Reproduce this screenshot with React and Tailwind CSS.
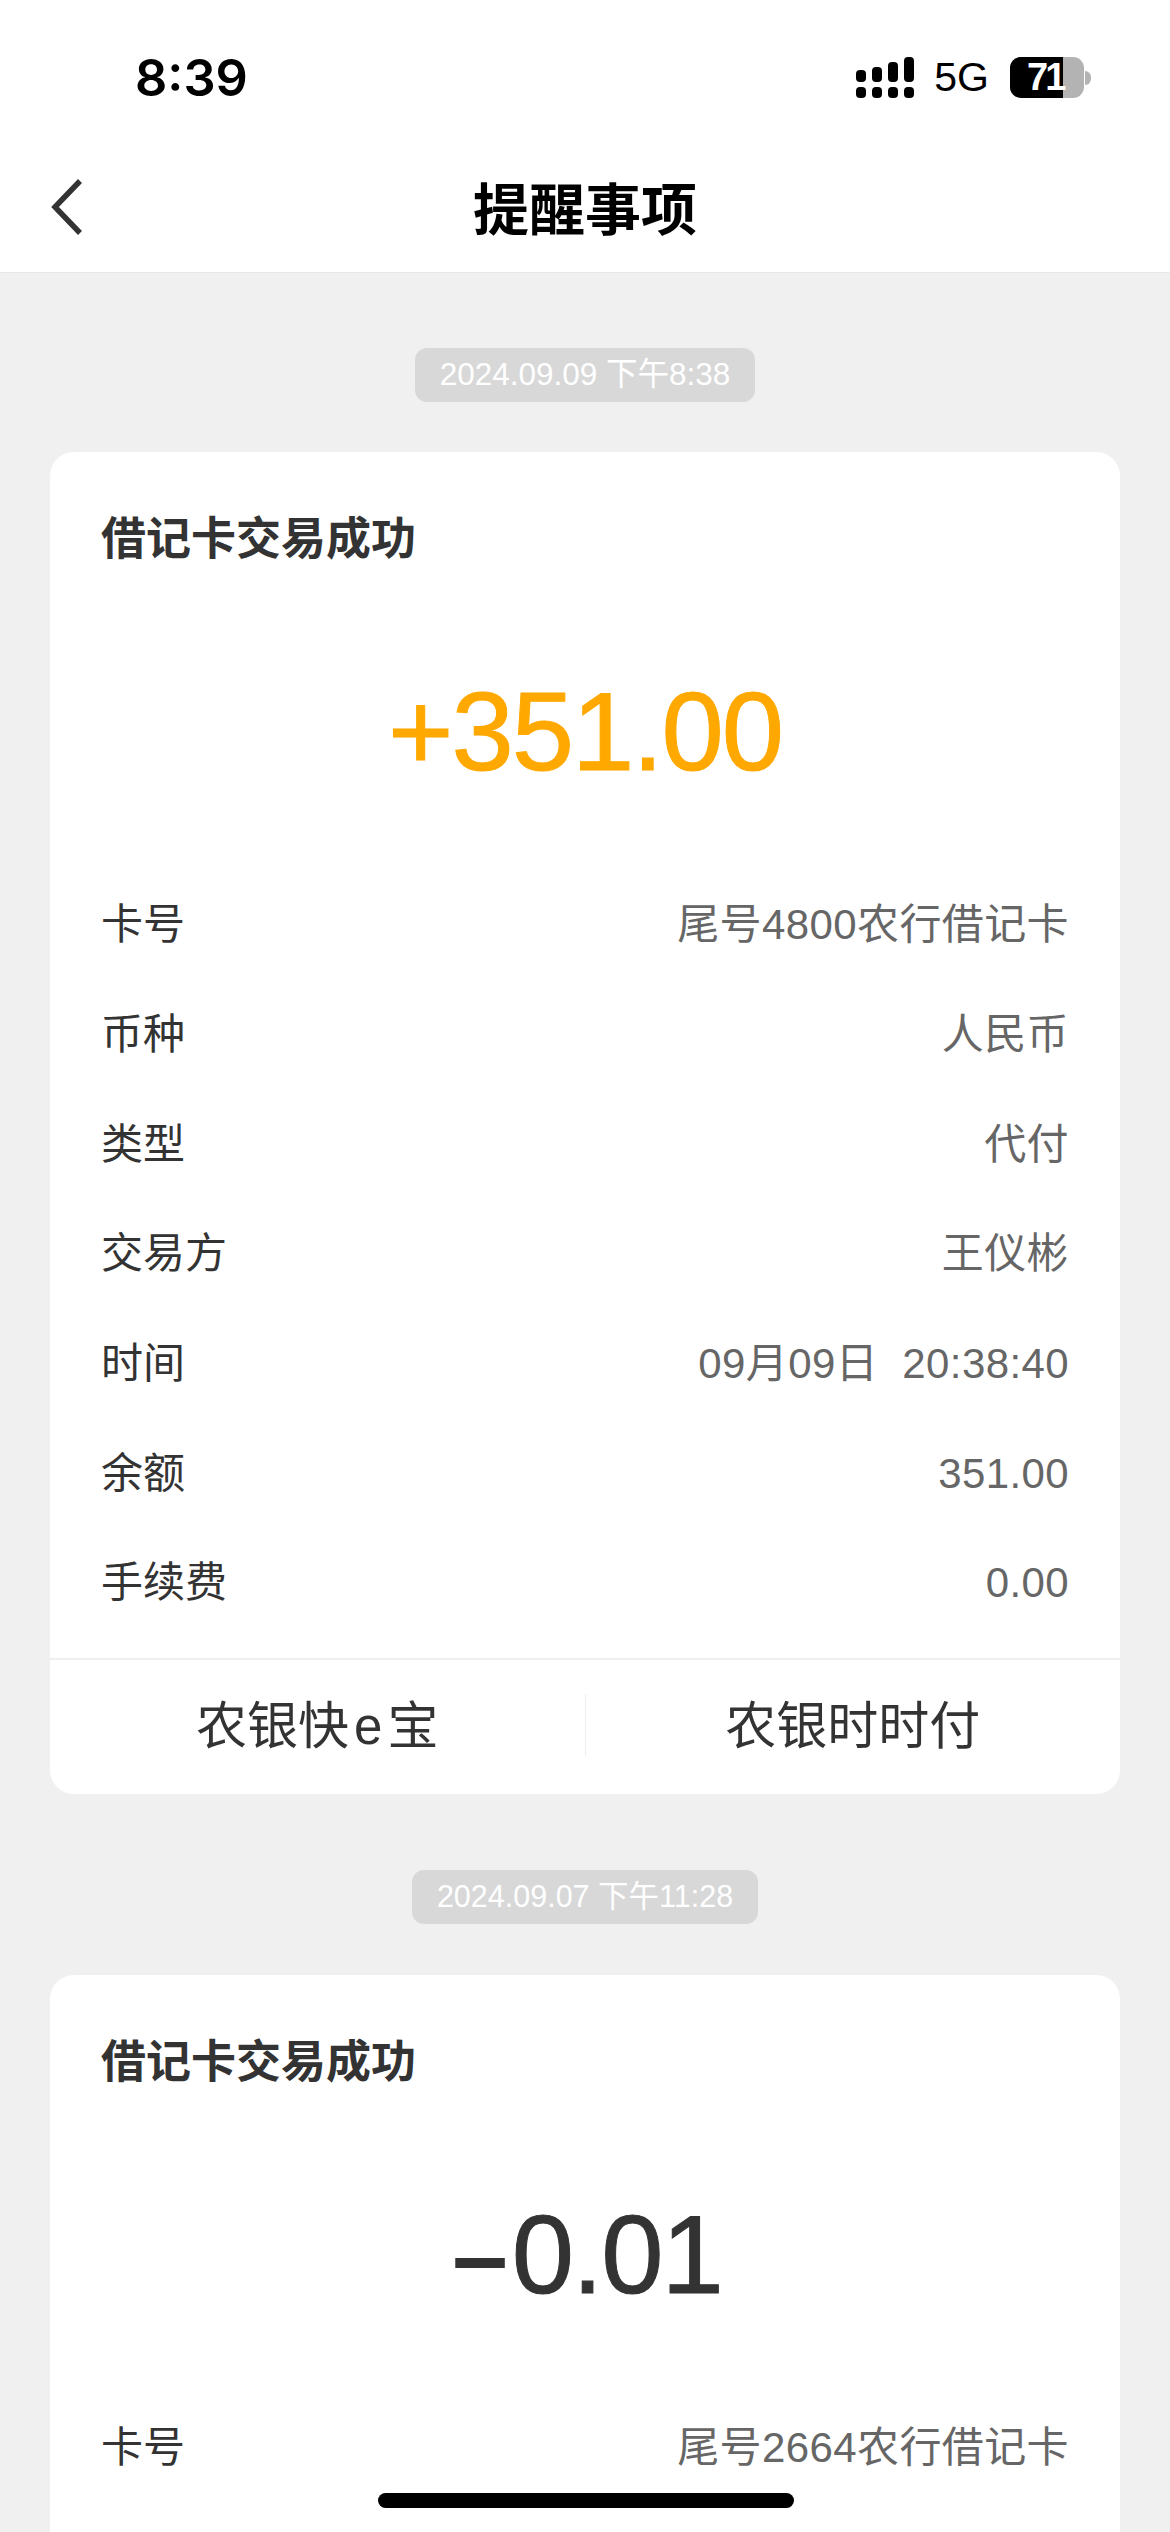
import React from "react";

const LATIN_CJK = "font-['Liberation_Sans','Noto_Sans_CJK_SC',sans-serif]";

const firstRows = [
  ["卡号", "尾号4800农行借记卡"],
  ["币种", "人民币"],
  ["类型", "代付"],
  ["交易方", "王仪彬"],
  ["时间", "09月09日\u00A0\u00A020:38:40"],
  ["余额", "351.00"],
  ["手续费", "0.00"],
];

function SignalIcon() {
  const bars = [
    { x: 0, y: 13, h: 12 },
    { x: 16, y: 10, h: 15 },
    { x: 32, y: 5, h: 20 },
    { x: 48, y: 0, h: 25 },
  ];
  return (
    <svg width="58" height="41" viewBox="0 0 58 41">
      {bars.map((b) => (
        <g key={b.x}>
          <rect x={b.x} y={b.y} width="10" height={b.h} rx="4" fill="#000" />
          <rect x={b.x} y="30" width="10" height="11" rx="4" fill="#000" />
        </g>
      ))}
    </svg>
  );
}

function Battery() {
  return (
    <div className="flex items-center">
      <div className="flex h-[41px] w-[74px] overflow-hidden rounded-[11px] bg-[#b3b3b3]">
        <div className="h-full w-[53px] bg-black pl-[17px] text-[38px] leading-[41px] font-bold tracking-[-3px] text-white">
          71
        </div>
      </div>
      <div className="ml-[1px] h-[14px] w-[6px] rounded-r-full bg-[#b3b3b3]" />
    </div>
  );
}

function StatusBar() {
  return (
    <div className="flex h-[155px] items-start justify-between bg-white pt-[50px] pl-[135px] pr-[79px]">
      <span className="font-['Inter'] text-[50.5px] leading-[56px] font-semibold text-black">8:39</span>
      <div className="mt-[7px] flex items-center">
        <SignalIcon />
        <span className="ml-[20px] mr-[21px] text-[41px] leading-[41px] text-black">5G</span>
        <Battery />
      </div>
    </div>
  );
}

function NavBar() {
  return (
    <div className="relative flex h-[118px] items-center justify-center border-b border-[#e8e8e8] bg-white">
      <svg
        className="absolute left-[50px] top-[24px]"
        width="34"
        height="56"
        viewBox="0 0 34 56"
        fill="none"
      >
        <path d="M30 2 L5 28 L30 54" stroke="#333" strokeWidth="5.5" />
      </svg>
      <h1 className="mb-[6px] text-[56px] leading-[70px] font-bold text-black">提醒事项</h1>
    </div>
  );
}

function DateChip({ children, className }) {
  return (
    <div className="flex justify-center">
      <span className={`flex h-[54px] items-center justify-center rounded-[12px] bg-[#d8d8d8] text-white ${className}`}>
        {children}
      </span>
    </div>
  );
}

function Row({ label, value }) {
  return (
    <div className="flex h-[109.7px] items-center justify-between px-[51px] text-[42px]">
      <span className="text-[#333]">{label}</span>
      <span className="tracking-[0.4px] text-[#666]">{value}</span>
    </div>
  );
}

function CardTitle() {
  return (
    <div className="px-[51px] pt-[60px] text-[45px] leading-[56px] font-bold text-[#333]">
      借记卡交易成功
    </div>
  );
}

export default function App() {
  return (
    <div className={`relative h-[2532px] overflow-hidden bg-[#f0f0f0] ${LATIN_CJK}`}>
      <StatusBar />
      <NavBar />

      <div className="px-[50px] pt-[75px]">
        <DateChip className="w-[340px] text-[31.5px]">2024.09.09 下午8:38</DateChip>

        <div className="mt-[50px] rounded-[24px] bg-white">
          <CardTitle />
          <div className="mt-[104px] h-[198px] text-center text-[112px] leading-[120px] tracking-[-2px] text-[#ffa800] [-webkit-text-stroke:1px_#ffa800]">
            +351.00
          </div>
          {firstRows.map(([label, value]) => (
            <Row key={label} label={label} value={value} />
          ))}
          <div className="mt-[20px] flex h-[136px] border-t-2 border-[#f0f0f0] text-[51px] text-[#333]">
            <div className="flex flex-1 items-center justify-center">
              农银快<span className="mx-[5px]">e</span>宝
            </div>
            <div className="mt-[34px] h-[62px] w-px bg-[#eeeeee]" />
            <div className="flex flex-1 items-center justify-center">农银时时付</div>
          </div>
        </div>

        <div className="mt-[76px]">
          <DateChip className="w-[346px] text-[30.5px]">2024.09.07 下午11:28</DateChip>
        </div>

        <div className="mt-[51px] rounded-t-[24px] bg-white pb-[200px]">
          <CardTitle />
          <div className="mt-[104px] flex h-[198px] items-start justify-center pl-[4px] text-[112px] leading-[120px] tracking-[-2px] text-[#333] [-webkit-text-stroke:1px_#333]">
            <span className="mr-[4px] text-[100px] leading-[120px] font-bold tracking-normal [-webkit-text-stroke:0]">–</span>
            <span>0.01</span>
          </div>
          <Row label="卡号" value="尾号2664农行借记卡" />
        </div>
      </div>

      <div className="absolute bottom-[24px] left-[378px] h-[15px] w-[416px] rounded-full bg-black" />
    </div>
  );
}
